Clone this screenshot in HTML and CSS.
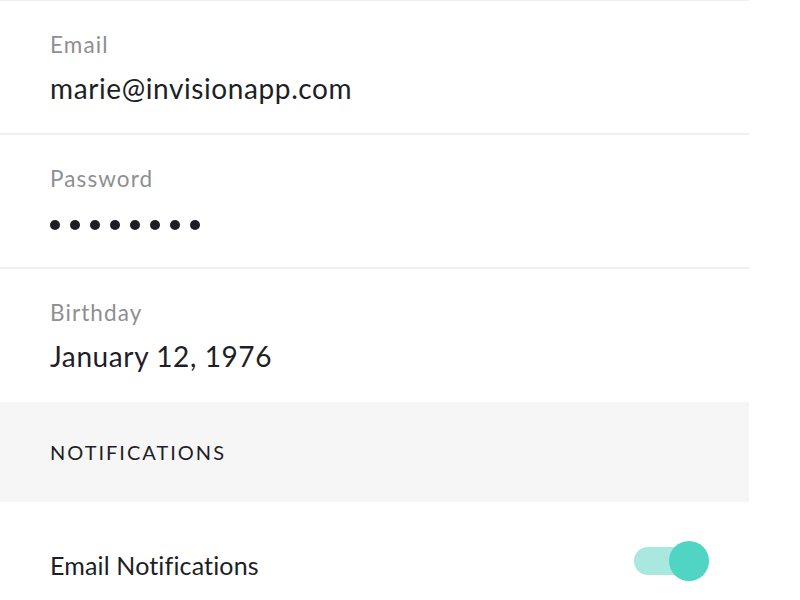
FILE: index.html
```html
<!DOCTYPE html>
<html lang="en">
<head>
<meta charset="utf-8">
<title>Account</title>
<link rel="stylesheet" href="styles.css">
</head>
<body>
<div class="settings">
  <div class="field">
    <div class="label">Email</div>
    <div class="value">marie@invisionapp.com</div>
  </div>
  <div class="field">
    <div class="label">Password</div>
    <div class="dots" aria-label="password hidden">
      <span></span><span></span><span></span><span></span><span></span><span></span><span></span><span></span>
    </div>
  </div>
  <div class="field field-last">
    <div class="label">Birthday</div>
    <div class="value">January 12, 1976</div>
  </div>
  <div class="section-head">NOTIFICATIONS</div>
  <div class="toggle-row">
    <div class="toggle-label">Email Notifications</div>
    <div class="toggle on"><span class="knob"></span></div>
  </div>
</div>
</body>
</html>
```

FILE: styles.css
```css
html, body {
  margin: 0;
  padding: 0;
  background: #ffffff;
}
body {
  font-family: "Lato", "Noto Sans", sans-serif;
  color: #1e1e26;
}
.settings {
  width: 749px;
  border-top: 1px solid #efefef;
}
.field {
  height: 132px;
  box-sizing: content-box;
  border-bottom: 2px solid #efefef;
  padding: 0 0 0 50px;
  display: flex;
  flex-direction: column;
}
.field-last {
  border-bottom: none;
  height: 133px;
}
.label {
  margin-top: 31px;
  font-size: 22.5px;
  line-height: 26px;
  letter-spacing: 1.1px;
  color: #8e8e93;
}
.value {
  margin-top: 13px;
  font-size: 28px;
  line-height: 34px;
  letter-spacing: 0.6px;
  color: #1e1e26;
}
.dots {
  margin-top: 28px;
  display: flex;
  gap: 10px;
}
.dots span {
  width: 10px;
  height: 10px;
  border-radius: 50%;
  background: #1e1e26;
}
.section-head {
  height: 100px;
  background: #f6f6f6;
  padding-left: 50px;
  display: flex;
  align-items: center;
  font-size: 20px;
  letter-spacing: 2px;
  color: #1e1e26;
}
.toggle-row {
  height: 98px;
  display: flex;
  align-items: center;
  justify-content: space-between;
  padding: 0 49px 0 50px;
}
.toggle-label {
  font-size: 25px;
  letter-spacing: 0.15px;
  margin-top: 27px;
}
.toggle {
  position: relative;
  width: 66px;
  height: 28px;
  border-radius: 14px;
  background: #a8e8df;
  margin-top: 20px;
}
.knob {
  position: absolute;
  right: -9px;
  top: -6px;
  width: 40px;
  height: 40px;
  border-radius: 50%;
  background: #50d4c4;
}
```
